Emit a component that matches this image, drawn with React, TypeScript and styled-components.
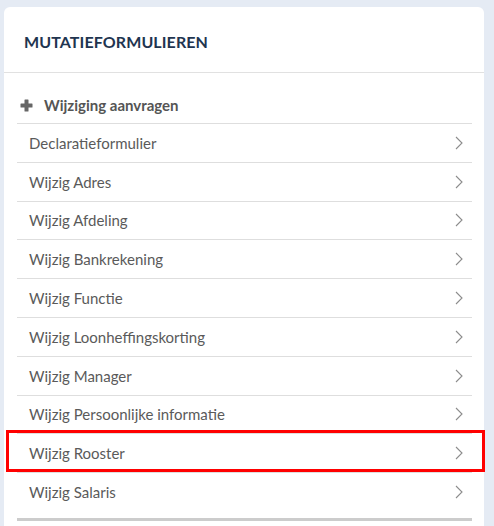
import React from 'react';
import styled, {createGlobalStyle} from 'styled-components';

const GlobalStyle = createGlobalStyle`
	html, body {
		margin: 0;
		padding: 0;
		background: #e5ebf4;
	}
	body {
		font-family: 'Lato', 'Open Sans', sans-serif;
	}
`;

const Page = styled.div`
	padding: 7px 10px 0 4px;
	height: 526px;
	box-sizing: border-box;
	overflow: hidden;
`;

const Card = styled.div`
	background: #ffffff;
	border-radius: 6px 6px 0 0;
	height: 100%;
`;

const Header = styled.div`
	height: 66px;
	display: flex;
	align-items: center;
	padding: 3px 20px 0;
	box-sizing: border-box;
	border-bottom: 1px solid #e1e1e1;
`;

const Title = styled.h2`
	margin: 0;
	font-size: 16px;
	font-weight: 700;
	color: #1f3550;
	letter-spacing: 0.1px;
`;

const List = styled.div`
	margin: 0 12px 0 13px;
`;

const AddRow = styled.div`
	height: 51px;
	padding-top: 14px;
	box-sizing: border-box;
	display: flex;
	align-items: center;
	gap: 11px;
	padding-left: 3px;
	border-bottom: 1px solid #dedede;
	font-size: 15px;
	font-weight: 700;
	color: #555555;
`;

const Item = styled.div<{$last?: boolean}>`
	position: relative;
	height: 38.8px;
	box-sizing: border-box;
	display: flex;
	align-items: center;
	justify-content: space-between;
	padding: 0 9px 0 12px;
	border-bottom: 1px solid ${(p) => (p.$last ? 'transparent' : '#dedede')};
	font-size: 15px;
	color: #5a5a5a;
`;

const Marker = styled.div`
	position: absolute;
	top: -4px;
	bottom: 0;
	left: -11px;
	right: -13px;
	border: 3px solid #ff0000;
	pointer-events: none;
`;

const FooterBar = styled.div`
	margin-top: 6px;
	height: 3px;
	background: #cccccc;
`;

const PlusIcon = () => (
	<svg width="13" height="13" viewBox="0 0 13 13">
		<path
			d="M5 0.5h3a0.5 0.5 0 0 1 0.5 0.5v3.5H12a0.5 0.5 0 0 1 0.5 0.5v3a0.5 0.5 0 0 1-0.5 0.5H8.5V12a0.5 0.5 0 0 1-0.5 0.5H5a0.5 0.5 0 0 1-0.5-0.5V8.5H1a0.5 0.5 0 0 1-0.5-0.5V5a0.5 0.5 0 0 1 0.5-0.5h3.5V1A0.5 0.5 0 0 1 5 0.5z"
			fill="#666666"
		/>
	</svg>
);

const Chevron = () => (
	<svg width="8" height="14" viewBox="0 0 8 14">
		<path d="M1 1l6 6-6 6" fill="none" stroke="#8c8c8c" strokeWidth="1.1" />
	</svg>
);

const ITEMS = [
	'Declaratieformulier',
	'Wijzig Adres',
	'Wijzig Afdeling',
	'Wijzig Bankrekening',
	'Wijzig Functie',
	'Wijzig Loonheffingskorting',
	'Wijzig Manager',
	'Wijzig Persoonlijke informatie',
	'Wijzig Rooster',
	'Wijzig Salaris',
];

const App: React.FunctionComponent = (): React.ReactElement => {
	return (
		<>
			<GlobalStyle />
			<Page>
				<Card>
					<Header>
						<Title>MUTATIEFORMULIEREN</Title>
					</Header>
					<List>
						<AddRow>
							<PlusIcon />
							Wijziging aanvragen
						</AddRow>
						{ITEMS.map((item, i) => (
							<Item key={i} $last={i === ITEMS.length - 1}>
								{item}
								<Chevron />
								{item === 'Wijzig Rooster' && <Marker />}
							</Item>
						))}
						<FooterBar />
					</List>
				</Card>
			</Page>
		</>
	);
};

export default App;
